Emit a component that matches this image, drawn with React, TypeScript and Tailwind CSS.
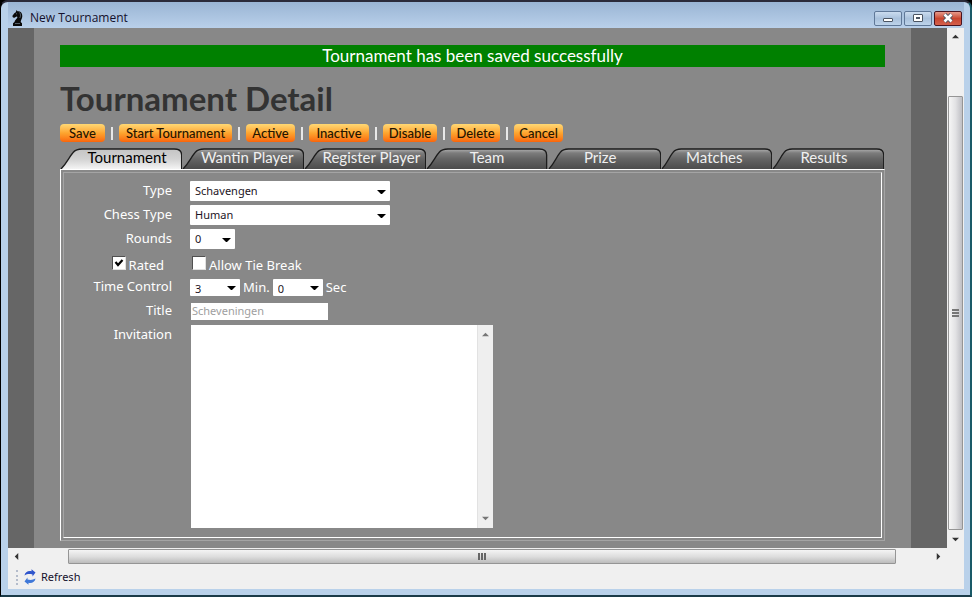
import type { ReactNode } from "react";

const actions = [
  { label: "Save", width: "w-[45px]" },
  { label: "Start Tournament", width: "w-[113px]" },
  { label: "Active", width: "w-[49px]" },
  { label: "Inactive", width: "w-[60px]" },
  { label: "Disable", width: "w-[54px]" },
  { label: "Delete", width: "w-[49px]" },
  { label: "Cancel", width: "w-[49px]" },
];

const tabs = [
  { label: "Tournament", pad: "pl-3" },
  { label: "Wantin Player", pad: "pl-2" },
  { label: "Register Player", pad: "pl-3" },
  { label: "Team", pad: "pl-0" },
  { label: "Prize", pad: "pr-2" },
  { label: "Matches", pad: "pr-1" },
  { label: "Results", pad: "pr-2" },
];

function KnightIcon() {
  return (
    <svg className="h-4 w-3" viewBox="0 0 12 16" aria-hidden="true">
      <path
        d="M4.500 0l1 1.300C8.500 1 10.300 3 10.300 6c0 2-.8 3-1.300 4.500l-.3 1.500 1.300 1.200V16H1v-2.800L2.500 12c0-2 2.700-3 3-5L4.500 6.500 2.500 7.800 1 7.500.3 6l2-2.800 1.500-1z"
        fill="#0a0a0a"
      />
      <path d="M4 3.800h1M7.500 2.500c1.300 1.500 1.300 3.500.3 5.500M3 13.500h5" stroke="#8a98a8" strokeWidth=".6" fill="none" />
    </svg>
  );
}

function RefreshIcon() {
  return (
    <svg className="h-4 w-3" viewBox="0 0 12 16" aria-hidden="true">
      <path d="M.5 6.500C1 3 4 1.500 7.500 2.200V.3L11.500 3.500 8.500 7.500V5.500C5.500 4.800 3 5 .5 6.500z" fill="#2f55cc" />
      <path d="M11.500 9.500C11 13 8 14.500 4.500 13.800v1.900L.5 12.500 3.500 8.500v2c3 .7 5.500.5 8-1z" fill="#3f78d8" />
    </svg>
  );
}

function Triangle({ dir, color = "#333" }: { dir: "up" | "down" | "left" | "right"; color?: string }) {
  const d = {
    up: "M0 6L4 2l4 4z",
    down: "M0 2l4 4 4-4z",
    left: "M6 0L2 4l4 4z",
    right: "M2 0l4 4-4 4z",
  }[dir];
  return (
    <svg className="size-[7px]" viewBox="0 0 8 8" aria-hidden="true">
      <path d={d} fill={color} />
    </svg>
  );
}

function TitleBar() {
  const control = "flex h-[15px] w-7 items-center justify-center rounded-xs border border-[#5f7898] bg-linear-to-b from-[#cbdcef] via-[#a9c1dc] to-[#bdd3ea]";
  return (
    <header className="flex h-[26px] shrink-0 items-center bg-linear-to-b from-[#9ab5d4] to-[#b9d0ea] pt-1.5 pr-0.5 pl-1">
      <KnightIcon />
      <h1 className="ml-1.5 flex-1 font-['Open_Sans',sans-serif] text-xs leading-4 text-[#14102c]">New Tournament</h1>
      <div className="flex gap-0.5">
        <button type="button" aria-label="Minimize" className={control}>
          <svg className="h-2.5 w-3" viewBox="0 0 12 10">
            <rect x="1.500" y="5.500" width="9" height="3" rx=".5" fill="#fff" stroke="#4b5563" />
          </svg>
        </button>
        <button type="button" aria-label="Maximize" className={control}>
          <svg className="h-2.5 w-3" viewBox="0 0 12 10">
            <rect x="1.500" y="1.500" width="9" height="7" rx=".5" fill="#fff" stroke="#4b5563" />
            <rect x="4.500" y="4.500" width="3" height="1" fill="#a9c1dc" stroke="#4b5563" />
          </svg>
        </button>
        <button
          type="button"
          aria-label="Close"
          className="flex h-[15px] w-7 items-center justify-center rounded-xs border border-[#4a1420] bg-linear-to-b from-[#e59a8c] via-[#c8452f] to-[#d4604c]"
        >
          <svg className="h-2.5 w-3" viewBox="0 0 12 10">
            <path d="M2.500 1.500l7 7M9.500 1.500l-7 7" stroke="#4b5563" strokeWidth="4.400" />
            <path d="M2.500 1.500l7 7M9.500 1.500l-7 7" stroke="#fff" strokeWidth="2.600" />
          </svg>
        </button>
      </div>
    </header>
  );
}

function Tab({ label, pad, active }: { label: string; pad: string; active: boolean }) {
  return (
    <button
      type="button"
      role="tab"
      aria-selected={active}
      className={`relative flex h-[21px] justify-center text-[15px] leading-[19px] ${pad} ${active ? "text-black" : "text-[#f0f0f0]"}`}
    >
      <svg className="absolute inset-0 size-full" viewBox="0 0 121 21" preserveAspectRatio="none" aria-hidden="true">
        <defs>
          <linearGradient id="tab-active" x1="0" y1="0" x2="0" y2="1">
            <stop offset="0" stopColor="#c4c4c4" />
            <stop offset=".5" stopColor="#d2d2d2" />
            <stop offset="1" stopColor="#f4f4f4" />
          </linearGradient>
          <linearGradient id="tab-idle" x1="0" y1="0" x2="0" y2="1">
            <stop offset="0" stopColor="#b0b0b0" />
            <stop offset=".2" stopColor="#7c7c7c" />
            <stop offset=".5" stopColor="#646464" />
            <stop offset="1" stopColor="#4c4c4c" />
          </linearGradient>
        </defs>
        <path
          d="M1 21C7 15 9 9 13 4.500 15.500 1.500 18 1 22 1h91c5 0 7.500 2 7.500 6v14"
          fill={active ? "url(#tab-active)" : "url(#tab-idle)"}
          stroke="#1c1c1c"
          strokeWidth="1.300"
        />
      </svg>
      <span className="relative">{label}</span>
    </button>
  );
}

function Field({ label, id, children }: { label: string; id: string; children: ReactNode }) {
  return (
    <div className="flex gap-[18px]">
      <label htmlFor={id} className="h-5 w-[108px] text-right leading-[18px]">
        {label}
      </label>
      {children}
    </div>
  );
}

function Select({ id, value, label, size }: { id: string; value: string; label?: string; size: string }) {
  return (
    <span className={`relative block ${size}`}>
      <select
        id={id}
        aria-label={label}
        defaultValue={value}
        className="block size-full appearance-none rounded-[1px] bg-white pl-[5px] font-['Noto_Sans',sans-serif] text-[11px] text-[#1c1424]"
      >
        <option>{value}</option>
      </select>
      <span className="pointer-events-none absolute inset-y-0 right-1 flex items-center pt-0.5">
        <svg className="h-1 w-[9px]" viewBox="0 0 9 4" aria-hidden="true">
          <path d="M0 0h9L4.500 4.500z" fill="#000" />
        </svg>
      </span>
    </span>
  );
}

function Check({ id }: { id: string }) {
  return (
    <span className="relative block size-3.5">
      <input
        id={id}
        type="checkbox"
        defaultChecked={id === "rated"}
        className="block size-3.5 peer appearance-none border border-t-[#505050] border-r-[#e0e0e0] border-b-[#e0e0e0] border-l-[#505050] bg-white"
      />
      <svg className="pointer-events-none absolute inset-0 hidden size-3.5 peer-checked:block" viewBox="0 0 14 14" aria-hidden="true">
        <path d="M3.500 6l2.500 3L10.500 4" stroke="#000" strokeWidth="2.200" fill="none" />
      </svg>
    </span>
  );
}

function TournamentForm() {
  return (
    <form className="flex flex-col gap-1 pt-2 pb-[9px] font-['Noto_Sans',sans-serif] text-[13px] leading-5 text-white">
      <Field label="Type" id="type">
        <Select id="type" value="Schavengen" size="h-5 w-[200px]" />
      </Field>
      <Field label="Chess Type" id="chess-type">
        <Select id="chess-type" value="Human" size="h-5 w-[200px]" />
      </Field>
      <Field label="Rounds" id="rounds">
        <Select id="rounds" value="0" size="h-5 w-[45px]" />
      </Field>
      <div className="flex h-5 gap-5">
        <div className="flex w-[108px] justify-end gap-[3px] pt-[3px] pr-2">
          <Check id="rated" />
          <label htmlFor="rated" className="leading-[18px]">Rated</label>
        </div>
        <div className="flex gap-[3px] pt-[3px]">
          <Check id="tie-break" />
          <label htmlFor="tie-break" className="leading-[18px]">Allow Tie Break</label>
        </div>
      </div>
      <Field label="Time Control" id="minutes">
        <div className="flex items-center gap-[3px]">
          <Select id="minutes" value="3" size="h-[17px] w-[50px]" />
          <span>Min.</span>
          <Select id="seconds" value="0" label="Seconds" size="h-[17px] w-[50px]" />
          <span>Sec</span>
        </div>
      </Field>
      <Field label="Title" id="title">
        <div className="flex h-5 items-center pl-px">
          <input
            id="title"
            type="text"
            disabled
            defaultValue="Scheveningen"
            className="h-[17px] w-[137px] bg-white px-px font-['Noto_Sans',sans-serif] text-[11px] text-[#a0a0a0]"
          />
        </div>
      </Field>
      <Field label="Invitation" id="invitation">
        <div className="ml-px flex h-[203px] w-[302px] bg-white">
          <textarea id="invitation" className="flex-1 resize-none p-1 text-xs text-black outline-none" />
          <div className="flex w-4 flex-col items-center justify-between border-l border-[#e2e2e2] bg-[#efefef] py-1.5">
            <Triangle dir="up" color="#777" />
            <Triangle dir="down" color="#777" />
          </div>
        </div>
      </Field>
    </form>
  );
}

function VerticalScroll() {
  return (
    <div className="flex w-[17px] shrink-0 flex-col items-center bg-[#f0f0f0]">
      <button type="button" aria-label="Scroll up" className="flex h-[17px] w-full items-center justify-center">
        <Triangle dir="up" />
      </button>
      <div className="h-[51px]" />
      <div className="flex w-[15px] flex-1 flex-col items-center justify-center gap-px rounded-[1px] border border-[#959595] bg-linear-to-r from-[#f6f6f6] via-[#e2e2e4] to-[#bfbfc4]">
        <span className="h-0.5 w-[7px] bg-[#777]" />
        <span className="h-0.5 w-[7px] bg-[#777]" />
        <span className="h-0.5 w-[7px] bg-[#777]" />
      </div>
      <button type="button" aria-label="Scroll down" className="flex h-[18px] w-full items-center justify-center">
        <Triangle dir="down" />
      </button>
    </div>
  );
}

function HorizontalScroll() {
  return (
    <div className="mr-[17px] flex h-[17px] shrink-0 items-center">
      <button type="button" aria-label="Scroll left" className="flex h-full w-[17px] items-center justify-center">
        <Triangle dir="left" />
      </button>
      <div className="w-[43px]" />
      <div className="flex h-[15px] flex-1 items-center justify-center gap-px rounded-[1px] border border-[#959595] bg-linear-to-b from-[#f4f4f4] via-[#dedede] to-[#bcbcbc]">
        <span className="h-[7px] w-0.5 bg-[#666]" />
        <span className="h-[7px] w-0.5 bg-[#666]" />
        <span className="h-[7px] w-0.5 bg-[#666]" />
      </div>
      <div className="w-[34px]" />
      <button type="button" aria-label="Scroll right" className="flex h-full w-[17px] items-center justify-center">
        <Triangle dir="right" />
      </button>
    </div>
  );
}

export default function App() {
  return (
    <div className="bg-black">
      <div className="flex min-h-screen flex-col rounded-t-lg border-t-2 border-r-2 border-b-2 border-l border-t-[#2b2b3a] border-r-[#1a5a68] border-b-[#1a3a48] border-l-black bg-[#b9d1ea] pr-[6px] pb-[6px] pl-[7px]">
        <TitleBar />
        <div className="flex flex-1 flex-col bg-[#f0f0f0]">
          <div className="flex flex-1">
            <main className="flex-1 bg-[#666] pr-9 pl-[26px] font-[Lato,sans-serif]">
              <div className="h-full bg-[#888] px-[26px] pt-[17px] pb-[7px]">
                <p role="status" className="h-[22px] bg-[#008000] text-center text-[17px] leading-[22px] text-white">
                  Tournament has been saved successfully
                </p>
                <h2 className="mt-3 h-[38px] text-[33px] leading-[38px] font-bold text-[#333]">Tournament Detail</h2>
                <div className="mt-[7px] flex h-[18px] items-center">
                  {actions.map((action, i) => (
                    <div key={action.label} className="flex items-center">
                      {i > 0 && <span className="mx-1.5 h-[13px] w-0.5 bg-[#e8e8e8]" />}
                      <button
                        type="button"
                        className={`h-[18px] rounded bg-linear-to-b from-[#ffd873] via-[#fda52e] to-[#f9650a] text-center text-[13px] leading-[17px] font-medium whitespace-nowrap text-[#241400] ${action.width}`}
                      >
                        {action.label}
                      </button>
                    </div>
                  ))}
                </div>
                <div role="tablist" className="mt-1.5 mr-px grid grid-cols-[122fr_122fr_122fr_121fr_113fr_111fr_112fr]">
                  {tabs.map((tab, i) => (
                    <Tab key={tab.label} label={tab.label} pad={tab.pad} active={i === 0} />
                  ))}
                </div>
                <div className="border border-t-white border-r-[#a4a4a4] border-b-[#a4a4a4] border-l-white p-0.5">
                  <div className="border border-t-[#a4a4a4] border-r-white border-b-white border-l-[#a4a4a4] pr-px">
                    <TournamentForm />
                  </div>
                </div>
              </div>
            </main>
            <VerticalScroll />
          </div>
          <HorizontalScroll />
          <footer className="flex h-6 shrink-0 items-center px-2">
            <span className="h-[15px] border-l-2 border-dotted border-[#b4bccb]" />
            <button type="button" className="ml-1.5 flex items-center gap-[5px] font-['Noto_Sans',sans-serif] text-[11px] text-[#14102c]">
              <RefreshIcon />
              Refresh
            </button>
          </footer>
        </div>
      </div>
    </div>
  );
}
